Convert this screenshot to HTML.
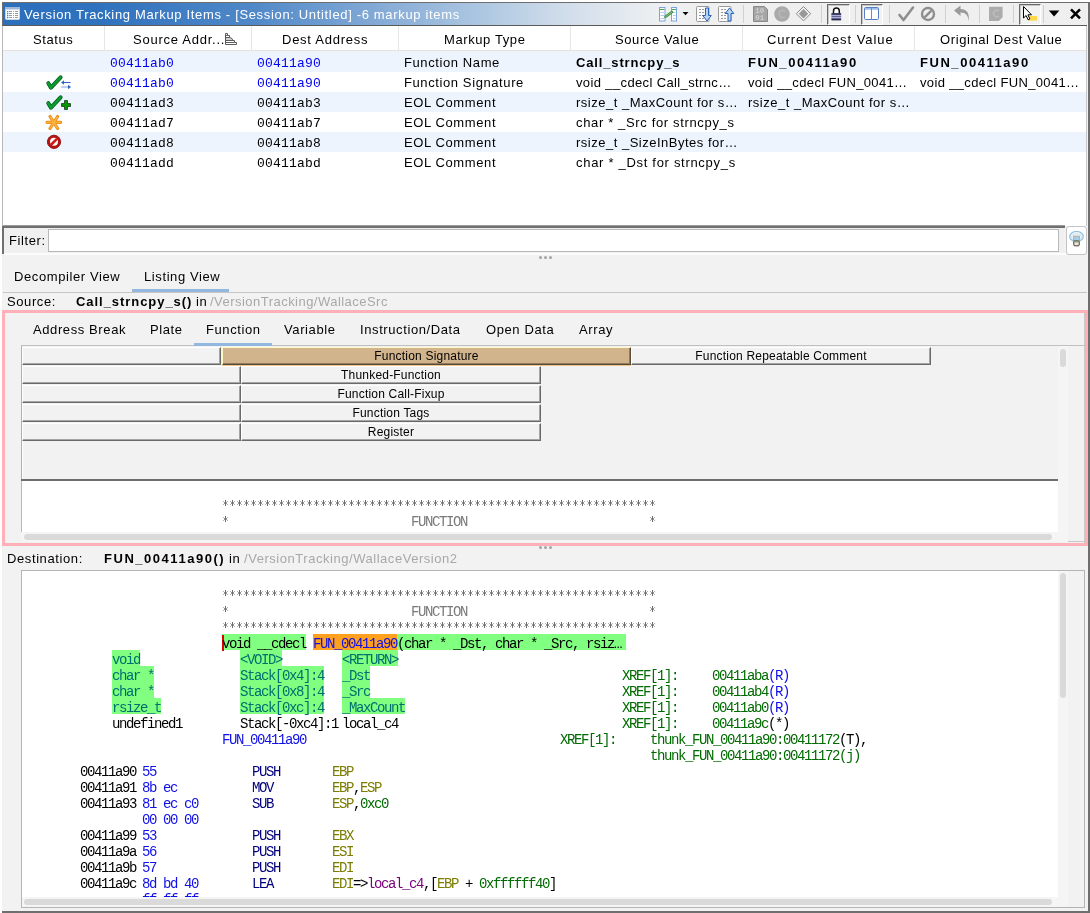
<!DOCTYPE html>
<html><head><meta charset="utf-8">
<style>
*{box-sizing:border-box;margin:0;padding:0}
html,body{width:1090px;height:913px;overflow:hidden;background:#fff;font-family:"Liberation Sans",sans-serif;color:#000}
body{will-change:transform}
.a{position:absolute}
.t{position:absolute;white-space:pre;line-height:1}
.m{font-family:"Liberation Mono",monospace}
#win{left:2px;top:2px;width:1088px;height:911px;background:#f2f2f2;border-top:1px solid #6e6e6e;border-right:2px solid #6e6e6e;border-bottom:2px solid #6e6e6e}
#title{left:3px;top:3px;width:1084px;height:22px;background:linear-gradient(90deg,#2b6fbd 0px,#2f72be 97px,#4f88c8 247px,#8db0d8 397px,#a8c4e0 467px,#cfdcea 557px,#eef0f2 657px,#efefef 700px,#efefef 1084px)}
.hdr{top:26px;height:25px;background:#fff;border-bottom:1px solid #e2e2e2}
.hsep{top:26px;width:1px;height:25px;background:#e6e6e6}
.row{left:3px;width:1083px;height:20px}
.alt{background:#edf4fd}
.cell{font-size:13.5px;top:0}
.blue{color:#0000f0}
.sep{top:5px;width:1px;height:18px;background:#d0d0d0}
.btnp{border:1px solid #fff;border-top:1px solid #6a6a6a;border-left:1px solid #6a6a6a;background:#f2f2f2;box-shadow:inset 1px 1px 0 #c8c8c8}
.fc{position:absolute;background:#f2f2f2;border-top:1px solid #fff;border-left:1px solid #fff;border-bottom:1px solid #6a6a6a;border-right:1px solid #6a6a6a;box-shadow:inset -1px -1px 0 #a4a4a4;font-size:12px;text-align:center;line-height:16px;letter-spacing:0.2px}
.lm{position:absolute;white-space:pre;font-family:"Liberation Mono",monospace;font-size:14px;letter-spacing:-1.4px;line-height:16px;padding-top:2px;color:#000}
.ast{font-size:17px;letter-spacing:-3.2px;margin-top:2px}
.ast2{font-size:17px;letter-spacing:-3.2px;position:relative;top:2px;line-height:10px}
.lst{font-family:"Liberation Mono",monospace;font-size:11.67px;line-height:16px;white-space:pre;position:absolute}
.g{color:#0a7a0a}
.hl{background:#80f080}
</style></head><body>

<svg width="0" height="0" style="position:absolute"><defs><pattern id="astpat" x="0" y="0" width="7" height="16" patternUnits="userSpaceOnUse">
<rect x="2" y="6" width="3" height="2" fill="#999"/>
<rect x="3" y="4" width="1" height="6" fill="#6e6e6e"/>
<rect x="1" y="5" width="1" height="1" fill="#b4b4b4"/><rect x="5" y="5" width="1" height="1" fill="#b4b4b4"/>
<rect x="1" y="8" width="1" height="1" fill="#b4b4b4"/><rect x="5" y="8" width="1" height="1" fill="#b4b4b4"/>
</pattern></defs></svg>
<div id="win" class="a"></div>
<div id="title" class="a"></div>
<!-- title icon -->
<svg class="a" style="left:5px;top:7px" width="15" height="13" viewBox="0 0 15 13">
<rect x="0.5" y="0.5" width="14" height="12" rx="1" fill="#fff" stroke="#c8d4e4"/>
<rect x="0" y="0" width="15" height="2.5" fill="#9fb8d8"/>
<g fill="#3a86d8"><rect x="2" y="4" width="1.3" height="1.3"/><rect x="2" y="6" width="1.3" height="1.3"/><rect x="2" y="8" width="1.3" height="1.3"/><rect x="2" y="10" width="1.3" height="1.3"/></g>
<g fill="#9a9a9a"><rect x="4" y="4" width="3" height="1"/><rect x="4" y="6" width="3" height="1"/><rect x="4" y="8" width="3" height="1"/><rect x="4" y="10" width="3" height="1"/>
<rect x="8" y="4" width="1" height="1"/><rect x="8" y="6" width="1" height="1"/><rect x="8" y="8" width="1" height="1"/><rect x="8" y="10" width="1" height="1"/>
<rect x="10" y="4" width="3" height="1"/><rect x="10" y="6" width="3" height="1"/><rect x="10" y="8" width="3" height="1"/><rect x="10" y="10" width="3" height="1"/></g>
</svg>
<div class="t" style="left:24px;top:8px;font-size:13px;letter-spacing:0.66px;color:#fff">Version Tracking Markup Items - [Session: Untitled] -6 markup items</div>
<div class="a" style="left:3px;top:25px;width:1084px;height:1px;background:#5a5a5a"></div>

<!-- table header -->
<div class="a hdr" style="left:3px;width:1083px"></div>
<div class="a hsep" style="left:104px"></div>
<div class="a hsep" style="left:251px"></div>
<div class="a hsep" style="left:398px"></div>
<div class="a hsep" style="left:570px"></div>
<div class="a hsep" style="left:742px"></div>
<div class="a hsep" style="left:914px"></div>
<div class="t" style="left:33px;top:33px;font-size:13px;letter-spacing:0.6px">Status</div>
<div class="t" style="left:133px;top:33px;font-size:13px;letter-spacing:0.75px">Source Addr...</div>
<div class="t" style="left:282px;top:33px;font-size:13px;letter-spacing:0.75px">Dest Address</div>
<div class="t" style="left:444px;top:33px;font-size:13px;letter-spacing:0.6px">Markup Type</div>
<div class="t" style="left:615px;top:33px;font-size:13px;letter-spacing:0.6px">Source Value</div>
<div class="t" style="left:767px;top:33px;font-size:13px;letter-spacing:0.95px">Current Dest Value</div>
<div class="t" style="left:940px;top:33px;font-size:13px;letter-spacing:0.6px">Original Dest Value</div>
<svg class="a" style="left:0;top:0" width="250" height="50" viewBox="0 0 250 50">
<path d="M226 37.5 H229.5 Q232 37.5 233 40.5 H226z" fill="#d0d0d0"/>
<path d="M225.5 44.5 V33.5 H227.5 V35.5 H229.5 V37.5 Q232 37.5 233 40.5 H234.5 V42.5 H236.5 V44.5 Z M225.5 40.5 H233 M225.5 42.5 H234.5 M225.5 37.5 H229.5 M225.5 35.5 H227.5" fill="none" stroke="#5a5a5a" stroke-width="1"/>
</svg>

<!-- table body -->
<div class="a" style="left:3px;top:52px;width:1083px;height:174px;background:#fff"></div>
<div class="a" style="left:1086px;top:26px;width:1px;height:200px;background:#c8c8c8"></div>
<div class="a" style="left:2px;top:2px;width:1px;height:224px;background:#b8b8b8"></div>
<div class="a" style="left:2px;top:2px;width:1px;height:24px;background:#6e6e6e"></div>
<div class="a row alt" style="top:52px"></div>
<div class="a row alt" style="top:92px"></div>
<div class="a row alt" style="top:132px"></div>
<div class="t m blue" style="left:110px;top:57px;font-size:13px;letter-spacing:0.2px">00411ab0</div>
<div class="t m blue" style="left:257px;top:57px;font-size:13px;letter-spacing:0.2px">00411a90</div>
<div class="t" style="left:404px;top:56px;font-size:13px;letter-spacing:0.6px">Function Name</div>
<div class="t" style="left:576px;top:56px;font-size:13px;font-weight:bold;letter-spacing:0.85px;">Call_strncpy_s</div>
<div class="t" style="left:748px;top:56px;font-size:13px;font-weight:bold;letter-spacing:1.55px;">FUN_00411a90</div>
<div class="t" style="left:920px;top:56px;font-size:13px;font-weight:bold;letter-spacing:1.55px;">FUN_00411a90</div>
<div class="t m blue" style="left:110px;top:77px;font-size:13px;letter-spacing:0.2px">00411ab0</div>
<div class="t m blue" style="left:257px;top:77px;font-size:13px;letter-spacing:0.2px">00411a90</div>
<div class="t" style="left:404px;top:76px;font-size:13px;letter-spacing:0.6px">Function Signature</div>
<div class="t" style="left:576px;top:76px;font-size:13px;letter-spacing:0.37px;">void __cdecl Call_strnc…</div>
<div class="t" style="left:748px;top:76px;font-size:13px;letter-spacing:0.35px;">void __cdecl FUN_0041…</div>
<div class="t" style="left:920px;top:76px;font-size:13px;letter-spacing:0.35px;">void __cdecl FUN_0041…</div>
<div class="t m" style="left:110px;top:97px;font-size:13px;letter-spacing:0.2px">00411ad3</div>
<div class="t m" style="left:257px;top:97px;font-size:13px;letter-spacing:0.2px">00411ab3</div>
<div class="t" style="left:404px;top:96px;font-size:13px;letter-spacing:0.6px">EOL Comment</div>
<div class="t" style="left:576px;top:96px;font-size:13px;letter-spacing:0.5px;">rsize_t _MaxCount for s…</div>
<div class="t" style="left:748px;top:96px;font-size:13px;letter-spacing:0.5px;">rsize_t _MaxCount for s…</div>
<div class="t m" style="left:110px;top:117px;font-size:13px;letter-spacing:0.2px">00411ad7</div>
<div class="t m" style="left:257px;top:117px;font-size:13px;letter-spacing:0.2px">00411ab7</div>
<div class="t" style="left:404px;top:116px;font-size:13px;letter-spacing:0.6px">EOL Comment</div>
<div class="t" style="left:576px;top:116px;font-size:13px;letter-spacing:0.65px;">char * _Src for strncpy_s</div>
<div class="t m" style="left:110px;top:137px;font-size:13px;letter-spacing:0.2px">00411ad8</div>
<div class="t m" style="left:257px;top:137px;font-size:13px;letter-spacing:0.2px">00411ab8</div>
<div class="t" style="left:404px;top:136px;font-size:13px;letter-spacing:0.6px">EOL Comment</div>
<div class="t" style="left:576px;top:136px;font-size:13px;letter-spacing:0.5px;">rsize_t _SizeInBytes for…</div>
<div class="t m" style="left:110px;top:157px;font-size:13px;letter-spacing:0.2px">00411add</div>
<div class="t m" style="left:257px;top:157px;font-size:13px;letter-spacing:0.2px">00411abd</div>
<div class="t" style="left:404px;top:156px;font-size:13px;letter-spacing:0.6px">EOL Comment</div>
<div class="t" style="left:576px;top:156px;font-size:13px;letter-spacing:0.7px;">char * _Dst for strncpy_s</div>


<svg class="a" style="left:0;top:0" width="100" height="160" viewBox="0 0 100 160">
<g id="chk">
<path d="M48.3 83.2 L51 87.6 L60.6 77.3" fill="none" stroke="#005a1a" stroke-width="4" stroke-linecap="round" stroke-linejoin="round"/>
<path d="M48.3 83.2 L51 87.6 L60.6 77.3" fill="none" stroke="#0a9c30" stroke-width="2.6" stroke-linecap="round" stroke-linejoin="round"/>
</g>
<path d="M63 82.5 h7.5" stroke="#2f67c0" stroke-width="1.1"/>
<path d="M61 82.5 l3 -2.2 v4.4z" fill="#2f67c0"/>
<path d="M61.2 87 h7" stroke="#9bb8e2" stroke-width="1.3"/>
<path d="M71 87 l-3 -2.3 v4.6z" fill="#2f67c0"/>
<g transform="translate(0,20)">
<path d="M48.3 83.2 L51 87.6 L60.6 77.3" fill="none" stroke="#005a1a" stroke-width="4" stroke-linecap="round" stroke-linejoin="round"/>
<path d="M48.3 83.2 L51 87.6 L60.6 77.3" fill="none" stroke="#0a9c30" stroke-width="2.6" stroke-linecap="round" stroke-linejoin="round"/>
</g>
<path d="M64.5 100.5 h3 v3 h3 v3 h-3 v3 h-3 v-3 h-3 v-3 h3z" fill="#009a00" stroke="#1a3a1a" stroke-width="0.8"/>
<g stroke="#e88a10" stroke-width="3.2" stroke-linecap="round">
<path d="M47 122.3 h13.6 M50 116.5 l7.6 12 M57.6 116.5 l-7.6 12"/>
</g>
<g stroke="#fbb03a" stroke-width="1.8" stroke-linecap="round">
<path d="M47.3 122.3 h13 M50.3 117 l7 11 M57.3 117 l-7 11"/>
</g>
<circle cx="54" cy="141.8" r="6.6" fill="#b81414" stroke="#8a0a0a" stroke-width="0.9"/>
<circle cx="54" cy="141.8" r="4" fill="#fff"/>
<path d="M50.8 145 L57.2 138.6" stroke="#d01818" stroke-width="2.6"/>
</svg>

<!-- toolbar -->
<div class="a sep" style="left:743px"></div>
<div class="a sep" style="left:821px"></div>
<div class="a btnp" style="left:827px;top:4px;width:23px;height:21px"></div>
<div class="a sep" style="left:855px"></div>
<div class="a btnp" style="left:861px;top:4px;width:22px;height:21px"></div>
<div class="a sep" style="left:889px"></div>
<div class="a sep" style="left:945px"></div>
<div class="a sep" style="left:979px"></div>
<div class="a sep" style="left:1013px"></div>
<div class="a btnp" style="left:1019px;top:4px;width:22px;height:21px"></div>
<div class="a sep" style="left:1043px"></div>

<svg class="a" style="left:0;top:0" width="1090" height="27" viewBox="0 0 1090 27">
<!-- compare -->
<g>
<rect x="659.5" y="7.5" width="5.5" height="13.5" fill="#fff" stroke="#7aa4dc" stroke-width="1"/>
<rect x="671.5" y="7.5" width="5" height="13.5" fill="#fff" stroke="#7aa4dc" stroke-width="1"/>
<path d="M660 9.5h4.5 M672 9.5h4" stroke="#4caa50" stroke-width="1"/>
<path d="M660.5 12.5h3.5 M660.5 15.5h3.5 M660.5 18.5h3.5 M673 12.5h2.5 M673 15.5h2.5 M673 18.5h2.5" stroke="#b4cceb" stroke-width="1"/>
<path d="M665.5 16.8 L672 12" stroke="#3c8c3a" stroke-width="2.6" stroke-linecap="round"/>
<path d="M665.5 16.8 L672 12" stroke="#8fd07e" stroke-width="0.9" stroke-linecap="round"/>
</g>
<path d="M682.5 12h6l-3 3.2z" fill="#000"/>
<!-- doc down -->
<rect x="696.5" y="6.5" width="12.5" height="15" rx="1" fill="#fafafa" stroke="#9a9a9a"/>
<path d="M699 9.5h2 M702 9.5h2 M699 12.5h2 M702 12.5h2 M699 15.5h2 M702 15.5h2 M699 18.5h2 M702 18.5h2" stroke="#9a9a9a"/>
<path d="M705.5 8 h3 v7.5 h2.8 l-4.3 5.5 l-4.3 -5.5 h2.8z" fill="#b9d3f0" stroke="#2a62b8" stroke-width="1"/>
<!-- doc up -->
<rect x="718.5" y="6.5" width="12.5" height="15" rx="1" fill="#fafafa" stroke="#9a9a9a"/>
<path d="M721 9.5h2 M724 9.5h2 M721 12.5h2 M724 12.5h2 M721 15.5h2 M724 15.5h2 M721 18.5h2 M724 18.5h2" stroke="#9a9a9a"/>
<path d="M728 21 h3 v-7.5 h2.8 l-4.3 -5.5 l-4.3 5.5 h2.8z" fill="#b9d3f0" stroke="#2a62b8" stroke-width="1"/>
<!-- 1001 -->
<path d="M753.5 6.5 h11 l3 3 v12 h-14z" fill="#a6a6a6" stroke="#8a8a8a"/>
<text x="755.3" y="13.3" font-family="Liberation Mono" font-size="7.5" font-weight="bold" fill="#cfcfcf">10</text>
<text x="755.3" y="19.8" font-family="Liberation Mono" font-size="7.5" font-weight="bold" fill="#cfcfcf">01</text>
<!-- circle -->
<circle cx="782" cy="14" r="7.8" fill="#aaaaaa"/>
<path d="M785 11.2 a3.6 3.6 0 1 0 0 5.6" fill="none" stroke="#b8b8b8" stroke-width="1.4"/>
<!-- diamond -->
<path d="M803.5 6.5 l7.2 7.2 l-7.2 7.2 l-7.2 -7.2z" fill="none" stroke="#8c8c8c" stroke-width="1"/>
<path d="M803.5 9 l4.7 4.7 l-4.7 4.7 l-4.7 -4.7z" fill="#999"/>
<!-- lock -->
<path d="M833.5 13.5 v-2.5 a2.9 2.9 0 0 1 5.8 0 v2.5" fill="#fff" stroke="#111" stroke-width="1.5"/>
<rect x="831.5" y="13.2" width="9.6" height="7" rx="0.6" fill="#5a5a8a"/>
<path d="M831.5 13.8h9.6 M831.5 19.6h9.6" stroke="#2a2a40" stroke-width="1.2"/>
<path d="M831.5 15.6h9.6 M831.5 17.6h9.6" stroke="#c0c0f0" stroke-width="0.9"/>
<!-- split -->
<rect x="864.5" y="7.5" width="14" height="12" rx="1.2" fill="#fff" stroke="#5a7cc0" stroke-width="1"/>
<rect x="865" y="8" width="13" height="1.8" fill="#9ec0ee"/>
<path d="M871.5 8v11.5" stroke="#6a8ac8" stroke-width="1"/>
<!-- check -->
<path d="M899.5 15 l4 5 l9.5 -12.5" fill="none" stroke="#8e8e8e" stroke-width="2.6" stroke-linecap="round" stroke-linejoin="round"/>
<!-- no entry -->
<circle cx="928" cy="14" r="6" fill="none" stroke="#8e8e8e" stroke-width="2.4"/>
<path d="M924.6 17.4 l6.8 -6.8" stroke="#8e8e8e" stroke-width="2.4"/>
<!-- undo -->
<path d="M968.5 21.5 c0 -6 -3 -9 -8 -9 v3.5 l-6.5 -5.5 l6.5 -5 v3.5 c6 0 9.5 4 8 12.5z" fill="#9a9a9a"/>
<!-- C doc -->
<path d="M989 6.7 h13.6 v10.5 l-3.8 3.8 h-9.8z" fill="#acacac"/>
<path d="M999 11 a3.3 3.3 0 1 0 0 5" fill="none" stroke="#bdbdbd" stroke-width="1.3"/>
<!-- cursor -->
<rect x="1028" y="16" width="9" height="4.6" fill="#ffd84a"/>
<path d="M1023.5 6.5 v11.5 l2.6 -2.5 l2 4.3 l1.8 -0.8 l-2 -4.2 h3.6z" fill="#fff" stroke="#000" stroke-width="1" stroke-linejoin="round"/>
<!-- dropdown -->
<path d="M1048.8 10.5h10.6l-5.3 6z" fill="#000"/>
<!-- X -->
<path d="M1071 9.3 l9 9 M1080 9.3 l-9 9" stroke="#000" stroke-width="2.5"/>
</svg>


<!-- filter -->
<div class="a" style="left:3px;top:225px;width:1062px;height:1px;background:#9a9a9a"></div>
<div class="a" style="left:3px;top:226px;width:1062px;height:2px;background:#707070"></div>
<div class="a" style="left:2px;top:226px;width:2px;height:28px;background:#707070"></div>
<div class="a" style="left:4px;top:228px;width:1060px;height:25px;background:#f0f0f0"></div>
<div class="a" style="left:4px;top:253px;width:1062px;height:2px;background:#fcfcfc"></div>
<div class="t" style="left:9px;top:234px;font-size:13px;letter-spacing:0.6px">Filter:</div>
<div class="a" style="left:48px;top:229px;width:1011px;height:23px;background:#fff;border:1px solid #b8b8b8"></div>
<div class="a" style="left:1066px;top:226px;width:21px;height:29px;background:#fff;border:1px solid #c4c4c4;border-radius:3px"></div>
<svg class="a" style="left:1069px;top:231px" width="16" height="17" viewBox="0 0 16 17">
<ellipse cx="7.5" cy="5.5" rx="6.8" ry="5" fill="#eef6fb" stroke="#8ec0e0" stroke-width="1.2"/>
<ellipse cx="7.5" cy="6" rx="5" ry="3.3" fill="none" stroke="#c4e0f0" stroke-width="0.8"/>
<rect x="4.5" y="5" width="6" height="5" fill="#a9cbe6" stroke="#b89860" stroke-width="0.6"/>
<rect x="4.8" y="10" width="5.4" height="4.8" rx="0.8" fill="#e8e8e8" stroke="#4a3a2a" stroke-width="1"/>
<rect x="5.5" y="10.5" width="4" height="1" fill="#8aa860"/>
</svg>
<div class="a" style="left:539px;top:256px;width:3px;height:3px;border-radius:50%;background:#a4a4a4"></div>
<div class="a" style="left:544px;top:256px;width:3px;height:3px;border-radius:50%;background:#a4a4a4"></div>
<div class="a" style="left:549px;top:256px;width:3px;height:3px;border-radius:50%;background:#a4a4a4"></div>

<!-- source tabs -->
<div class="t" style="left:14px;top:270px;font-size:13px;letter-spacing:0.6px">Decompiler View</div>
<div class="t" style="left:144px;top:270px;font-size:13px;letter-spacing:0.6px">Listing View</div>
<div class="a" style="left:132px;top:289px;width:97px;height:3px;background:#93b8e0"></div>
<div class="a" style="left:3px;top:292px;width:1084px;height:1px;background:#c6c6c6"></div>
<div class="t" style="left:7px;top:295px;font-size:13px;letter-spacing:0.6px">Source:</div>
<div class="t" style="left:76px;top:295px;font-size:13px;letter-spacing:0.95px;font-weight:bold">Call_strncpy_s()</div>
<div class="t" style="left:196px;top:295px;font-size:13px;letter-spacing:0.6px">in</div>
<div class="t" style="left:210px;top:295px;font-size:13px;color:#a8a8a8;letter-spacing:0.47px">/VersionTracking/WallaceSrc</div>

<!-- pink box -->
<div class="a" style="left:2px;top:310px;width:1086px;height:236px;border:3px solid #ffb0b8"></div>
<div class="a" style="left:21px;top:541px;width:1064px;height:1px;background:#c8c8c8"></div>
<div class="a" style="left:21px;top:481px;width:1px;height:60px;background:#b8b8b8"></div>
<div class="a" style="left:1084px;top:313px;width:1px;height:230px;background:#c8c8c8"></div>
<div class="a" style="left:1088px;top:310px;width:1px;height:237px;background:#6e6e6e"></div>
<div class="t" style="left:33px;top:323px;font-size:13px;letter-spacing:0.6px">Address Break</div>
<div class="t" style="left:150px;top:323px;font-size:13px;letter-spacing:0.6px">Plate</div>
<div class="t" style="left:206px;top:323px;font-size:13px;letter-spacing:0.6px">Function</div>
<div class="t" style="left:284px;top:323px;font-size:13px;letter-spacing:0.6px">Variable</div>
<div class="t" style="left:360px;top:323px;font-size:13px;letter-spacing:0.6px">Instruction/Data</div>
<div class="t" style="left:486px;top:323px;font-size:13px;letter-spacing:0.6px">Open Data</div>
<div class="t" style="left:579px;top:323px;font-size:13px;letter-spacing:0.6px">Array</div>
<div class="a" style="left:21px;top:345px;width:1063px;height:1px;background:#c0c0c0"></div>
<div class="a" style="left:194px;top:343px;width:78px;height:3px;background:#93b8e0"></div>
<div class="a" style="left:21px;top:346px;width:1037px;height:134px;background:#f2f2f2;border-left:1px solid #b0b0b0"></div>
<div class="a" style="left:1058px;top:346px;width:10px;height:186px;background:#f5f5f5"></div>
<div class="a" style="left:1060px;top:349px;width:6px;height:18px;background:#dadada;border-radius:3px"></div>
<div class="fc" style="left:22px;top:347px;width:199px;height:18px"></div>
<div class="fc" style="left:222px;top:347px;width:409px;height:18px;background:#d2b48c;border-top-color:#fff8c8;border-left-color:#fff8c8;border-bottom-color:#5a4a38;border-right-color:#5a4a38;box-shadow:inset -1px -1px 0 #8f7a5e">Function Signature</div>
<div class="a" style="left:222px;top:365px;width:409px;height:1px;background:#ecc48e"></div>
<div class="fc" style="left:631px;top:347px;width:300px;height:18px">Function Repeatable Comment</div>
<div class="fc" style="left:22px;top:366px;width:219px;height:18px"></div>
<div class="fc" style="left:241px;top:366px;width:300px;height:18px">Thunked-Function</div>
<div class="fc" style="left:22px;top:385px;width:219px;height:18px"></div>
<div class="fc" style="left:241px;top:385px;width:300px;height:18px">Function Call-Fixup</div>
<div class="fc" style="left:22px;top:404px;width:219px;height:18px"></div>
<div class="fc" style="left:241px;top:404px;width:300px;height:18px">Function Tags</div>
<div class="fc" style="left:22px;top:423px;width:219px;height:18px"></div>
<div class="fc" style="left:241px;top:423px;width:300px;height:18px">Register</div>
<div class="a" style="left:22px;top:441px;width:1px;height:38px;background:#fff"></div>
<div class="a" style="left:21px;top:479px;width:1037px;height:2px;background:#6e6e6e"></div>
<div class="a" style="left:22px;top:481px;width:1036px;height:51px;background:#fff"></div>
<svg class="a" style="left:222px;top:496px" width="434" height="16"><rect width="434" height="16" fill="url(#astpat)"/></svg>
<div class="lm" style="left:222px;top:512px;color:#7a7a7a">                           FUNCTION</div>
<svg class="a" style="left:222px;top:512px" width="7" height="16"><rect width="7" height="16" fill="url(#astpat)"/></svg><svg class="a" style="left:649px;top:512px" width="7" height="16"><rect width="7" height="16" fill="url(#astpat)"/></svg>
<div class="a" style="left:21px;top:532px;width:1047px;height:10px;background:#f5f5f5"></div>
<div class="a" style="left:24px;top:534px;width:1028px;height:6px;background:#dadada;border-radius:3px"></div>
<div class="a" style="left:539px;top:546px;width:3px;height:3px;border-radius:50%;background:#a4a4a4"></div><div class="a" style="left:544px;top:546px;width:3px;height:3px;border-radius:50%;background:#a4a4a4"></div><div class="a" style="left:549px;top:546px;width:3px;height:3px;border-radius:50%;background:#a4a4a4"></div>

<!-- destination -->
<div class="t" style="left:7px;top:552px;font-size:13px;letter-spacing:0.6px">Destination:</div>
<div class="t" style="left:104px;top:552px;font-size:13px;letter-spacing:1.53px;font-weight:bold">FUN_00411a90()</div>
<div class="t" style="left:229px;top:552px;font-size:13px;letter-spacing:0.6px">in</div>
<div class="t" style="left:244px;top:552px;font-size:13px;letter-spacing:0.54px;color:#a8a8a8">/VersionTracking/WallaceVersion2</div>
<div class="a" style="left:21px;top:570px;width:1064px;height:338px;border:1px solid #b4b4b4;background:#fff"></div>
<div class="a" style="left:1058px;top:571px;width:26px;height:336px;background:#f2f2f2"></div>
<div class="a" style="left:1058px;top:571px;width:10px;height:326px;background:#f5f5f5"></div>
<div class="a" style="left:1060px;top:573px;width:6px;height:125px;background:#dadada;border-radius:3px"></div>
<div class="a" style="left:22px;top:897px;width:1046px;height:10px;background:#f5f5f5"></div>
<div class="a" style="left:24px;top:899px;width:1028px;height:6px;background:#dadada;border-radius:3px"></div>
<div id="dest"><div class="a" style="left:22px;top:571px;width:1036px;height:326px;overflow:hidden"><div class="a" style="left:-22px;top:-571px;width:1090px;height:913px"><div class="a" style="left:222px;top:634px;width:84px;height:16px;background:#80ff80"></div>
<div class="a" style="left:313px;top:634px;width:84px;height:16px;background:#ffa01e"></div>
<div class="a" style="left:397px;top:634px;width:229px;height:16px;background:#80ff80"></div>
<div class="a" style="left:222px;top:635px;width:2px;height:16px;background:#e00000"></div>
<div class="a" style="left:112px;top:650px;width:28px;height:16px;background:#80ff80"></div>
<div class="a" style="left:240px;top:650px;width:42px;height:16px;background:#80ff80"></div>
<div class="a" style="left:342px;top:650px;width:56px;height:16px;background:#80ff80"></div>
<div class="a" style="left:112px;top:666px;width:42px;height:16px;background:#80ff80"></div>
<div class="a" style="left:240px;top:666px;width:84px;height:16px;background:#80ff80"></div>
<div class="a" style="left:342px;top:666px;width:28px;height:16px;background:#80ff80"></div>
<div class="a" style="left:112px;top:682px;width:42px;height:16px;background:#80ff80"></div>
<div class="a" style="left:240px;top:682px;width:84px;height:16px;background:#80ff80"></div>
<div class="a" style="left:342px;top:682px;width:28px;height:16px;background:#80ff80"></div>
<div class="a" style="left:112px;top:698px;width:49px;height:16px;background:#80ff80"></div>
<div class="a" style="left:240px;top:698px;width:84px;height:16px;background:#80ff80"></div>
<div class="a" style="left:342px;top:698px;width:63px;height:16px;background:#80ff80"></div>
<svg class="a" style="left:222px;top:586px" width="434" height="16"><rect width="434" height="16" fill="url(#astpat)"/></svg>
<div class="lm" style="left:222px;top:602px;color:#7a7a7a">                           FUNCTION</div>
<svg class="a" style="left:222px;top:602px" width="7" height="16"><rect width="7" height="16" fill="url(#astpat)"/></svg>
<svg class="a" style="left:649px;top:602px" width="7" height="16"><rect width="7" height="16" fill="url(#astpat)"/></svg>
<svg class="a" style="left:222px;top:618px" width="434" height="16"><rect width="434" height="16" fill="url(#astpat)"/></svg>
<div class="lm" style="left:222px;top:634px">void __cdecl <span style="color:#1010e8">FUN_00411a90</span>(char * _Dst, char * _Src, rsiz…</div>
<div class="lm" style="left:112px;top:650px"><span style="color:#00706e">void</span></div>
<div class="lm" style="left:240px;top:650px"><span style="color:#00706e">&lt;VOID&gt;</span></div>
<div class="lm" style="left:342px;top:650px"><span style="color:#00706e">&lt;RETURN&gt;</span></div>
<div class="lm" style="left:112px;top:666px"><span style="color:#00706e">char *</span></div>
<div class="lm" style="left:240px;top:666px"><span style="color:#00706e">Stack[0x4]:4</span></div>
<div class="lm" style="left:342px;top:666px"><span style="color:#00706e">_Dst</span></div>
<div class="lm" style="left:622px;top:666px"><span style="color:#006b00">XREF[1]:</span></div>
<div class="lm" style="left:712px;top:666px"><span style="color:#006b00">00411aba</span><span style="color:#1010e8">(R)</span></div>
<div class="lm" style="left:112px;top:682px"><span style="color:#00706e">char *</span></div>
<div class="lm" style="left:240px;top:682px"><span style="color:#00706e">Stack[0x8]:4</span></div>
<div class="lm" style="left:342px;top:682px"><span style="color:#00706e">_Src</span></div>
<div class="lm" style="left:622px;top:682px"><span style="color:#006b00">XREF[1]:</span></div>
<div class="lm" style="left:712px;top:682px"><span style="color:#006b00">00411ab4</span><span style="color:#1010e8">(R)</span></div>
<div class="lm" style="left:112px;top:698px"><span style="color:#00706e">rsize_t</span></div>
<div class="lm" style="left:240px;top:698px"><span style="color:#00706e">Stack[0xc]:4</span></div>
<div class="lm" style="left:342px;top:698px"><span style="color:#00706e">_MaxCount</span></div>
<div class="lm" style="left:622px;top:698px"><span style="color:#006b00">XREF[1]:</span></div>
<div class="lm" style="left:712px;top:698px"><span style="color:#006b00">00411ab0</span><span style="color:#1010e8">(R)</span></div>
<div class="lm" style="left:112px;top:714px">undefined1</div>
<div class="lm" style="left:240px;top:714px">Stack[-0xc4]:1</div>
<div class="lm" style="left:342px;top:714px">local_c4</div>
<div class="lm" style="left:622px;top:714px"><span style="color:#006b00">XREF[1]:</span></div>
<div class="lm" style="left:712px;top:714px"><span style="color:#006b00">00411a9c</span>(*)</div>
<div class="lm" style="left:222px;top:730px"><span style="color:#1010e8">FUN_00411a90</span></div>
<div class="lm" style="left:560px;top:730px"><span style="color:#006b00">XREF[1]:</span></div>
<div class="lm" style="left:650px;top:730px"><span style="color:#006b00">thunk_FUN_00411a90:00411172</span>(T),</div>
<div class="lm" style="left:650px;top:746px"><span style="color:#006b00">thunk_FUN_00411a90:00411172(j)</span></div>
<div class="lm" style="left:80px;top:762px">00411a90</div>
<div class="lm" style="left:142px;top:762px"><span style="color:#1010e8">55</span></div>
<div class="lm" style="left:252px;top:762px"><span style="color:#00007c">PUSH</span></div>
<div class="lm" style="left:332px;top:762px"><span style="color:#7c7c00">EBP</span></div>
<div class="lm" style="left:80px;top:778px">00411a91</div>
<div class="lm" style="left:142px;top:778px"><span style="color:#1010e8">8b ec</span></div>
<div class="lm" style="left:252px;top:778px"><span style="color:#00007c">MOV</span></div>
<div class="lm" style="left:332px;top:778px"><span style="color:#7c7c00">EBP</span>,<span style="color:#7c7c00">ESP</span></div>
<div class="lm" style="left:80px;top:794px">00411a93</div>
<div class="lm" style="left:142px;top:794px"><span style="color:#1010e8">81 ec c0</span></div>
<div class="lm" style="left:252px;top:794px"><span style="color:#00007c">SUB</span></div>
<div class="lm" style="left:332px;top:794px"><span style="color:#7c7c00">ESP</span>,<span style="color:#006b00">0xc0</span></div>
<div class="lm" style="left:142px;top:810px"><span style="color:#1010e8">00 00 00</span></div>
<div class="lm" style="left:80px;top:826px">00411a99</div>
<div class="lm" style="left:142px;top:826px"><span style="color:#1010e8">53</span></div>
<div class="lm" style="left:252px;top:826px"><span style="color:#00007c">PUSH</span></div>
<div class="lm" style="left:332px;top:826px"><span style="color:#7c7c00">EBX</span></div>
<div class="lm" style="left:80px;top:842px">00411a9a</div>
<div class="lm" style="left:142px;top:842px"><span style="color:#1010e8">56</span></div>
<div class="lm" style="left:252px;top:842px"><span style="color:#00007c">PUSH</span></div>
<div class="lm" style="left:332px;top:842px"><span style="color:#7c7c00">ESI</span></div>
<div class="lm" style="left:80px;top:858px">00411a9b</div>
<div class="lm" style="left:142px;top:858px"><span style="color:#1010e8">57</span></div>
<div class="lm" style="left:252px;top:858px"><span style="color:#00007c">PUSH</span></div>
<div class="lm" style="left:332px;top:858px"><span style="color:#7c7c00">EDI</span></div>
<div class="lm" style="left:80px;top:874px">00411a9c</div>
<div class="lm" style="left:142px;top:874px"><span style="color:#1010e8">8d bd 40</span></div>
<div class="lm" style="left:252px;top:874px"><span style="color:#00007c">LEA</span></div>
<div class="lm" style="left:332px;top:874px"><span style="color:#7c7c00">EDI</span>=&gt;<span style="color:#7a007a">local_c4</span>,[<span style="color:#7c7c00">EBP</span> + <span style="color:#006b00">0xffffff40</span>]</div>
<div class="lm" style="left:142px;top:890px"><span style="color:#1010e8">ff ff ff</span></div></div></div></div><!--/dest-->
</body></html>
